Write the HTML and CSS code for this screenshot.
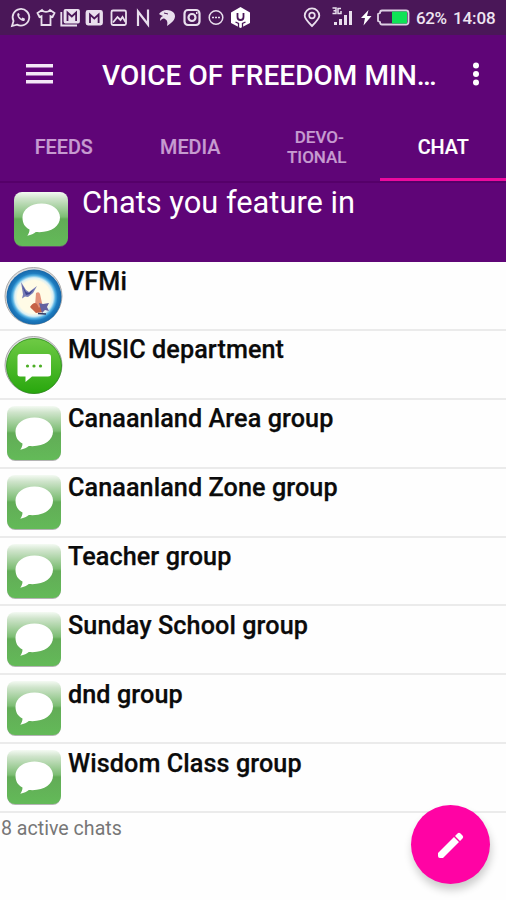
FILE: index.html
```html
<!DOCTYPE html>
<html lang="en">
<head>
<meta charset="utf-8">
<title>Chats</title>
<link rel="stylesheet" href="styles.css">
</head>
<body>
<svg class="defs" aria-hidden="true">
  <defs>
    <linearGradient id="gloss" x1="0" y1="0" x2="0" y2="1">
      <stop offset="0" stop-color="#f4faf3"/><stop offset=".12" stop-color="#cfe4cb"/><stop offset=".46" stop-color="#7dbd74"/><stop offset=".5" stop-color="#62ac57"/><stop offset="1" stop-color="#63ba58"/>
    </linearGradient>
    <linearGradient id="green" x1="0" y1="0" x2="0" y2="1">
      <stop offset="0" stop-color="#6fca45"/><stop offset="1" stop-color="#28a70d"/>
    </linearGradient>
    <radialGradient id="blue">
      <stop offset=".6" stop-color="#fffbe6"/><stop offset=".7" stop-color="#d8eff5"/><stop offset=".78" stop-color="#54b0e2"/><stop offset=".86" stop-color="#1c7cc0"/><stop offset="1" stop-color="#1767a8"/>
    </radialGradient>
    <symbol id="bubble" viewBox="0 0 56 58">
      <rect x="1.3" y="3" width="53.4" height="53" rx="8" fill="#777" opacity=".55"/>
      <rect x="1" y="1" width="54" height="54" rx="8" fill="url(#gloss)"/>
      <path d="M28.500 12.500C18 12.500 9.500 18.500 9.500 26.500c0 5.500 2 9.500 7 12 0 2.500-.8 4-2.200 6.200 4-.8 6.300-2 8.500-3.700 14.500 1.300 24.200-5.500 24.200-14.500 0-8-8-14-18.500-14z" fill="#fff"/>
    </symbol>
  </defs>
</svg>

<div class="status">
  <svg class="status-left" viewBox="0 0 250 35" fill="none" stroke="#e9dfed" stroke-width="1.800">
    <path d="M12 26l1.500-5a8.300 8.300 0 1 1 3.500 3.600z"/><path d="M17.500 13.500c-1.500 3 3.500 8.500 7 7.200l.5-2-2.500-1.200-1.200 1.200-2.500-2.700 1-1-1-2z" fill="#e9dfed" stroke="none"/>
    <path d="M42 10l-4.500 3 2 4 2-.8V25h9v-8.800l2 .8 2-4L50 10c-2 2.500-6 2.500-8 0z"/>
    <path d="M61.300 12v13.500H77"/><rect x="64.500" y="10" width="14.500" height="12.500" rx="1" fill="#e9dfed"/><path d="M67.500 21v-8.500l4.300 4 4.300-4V21" stroke="#4a1758" stroke-width="1.800"/>
    <rect x="86.500" y="11" width="15.500" height="13.500" rx="1.500" fill="#e9dfed"/><path d="M90 23v-8.500l4.300 4 4.300-4V23" stroke="#4a1758" stroke-width="1.800"/>
    <rect x="111.500" y="10.500" width="14.500" height="14.500" rx="1.500"/><path d="M113 22.500l4.500-5.500 3 3 2-3 3 5"/>
    <path d="M138 26V11.500L148 24.500V9.500" stroke-width="2.200"/>
    <path d="M159 14c4-6 12-4.500 15-1 3 5-1 9-7 13 1-4 0-6-2-7-2-1-3 0-5 2 0-3 1-4 3-5-2-1-3-1-4-2z" fill="#e9dfed" stroke="none"/><path d="M164 13l4 1" stroke="#4a1758" stroke-width="1"/>
    <rect x="184.500" y="10" width="15" height="15" rx="3.500" stroke-width="2.200"/><circle cx="192" cy="17.500" r="3.500" stroke-width="2.200"/><path d="M196 13h1.500"/>
    <circle cx="216" cy="17.500" r="6.800" stroke-width="1.500"/><path d="M212 17.500h8" stroke-dasharray="2 1" stroke-width="1.500"/>
    <path d="M240.500 7l9.500 5.500v10.500l-9.500 5-9.500-5v-10.500z" fill="#fff" stroke="none"/><path d="M237.500 13v4q0 3 3 3t3-3v-4" stroke="#4a1758" stroke-width="1.800"/><path d="M235.500 22l3 1.500v4M245.500 22l-3 1.500v4" stroke="#4a1758" stroke-width="1.300"/>
  </svg>
  <svg class="status-right" viewBox="0 0 112 35">
    <path d="M12 26c-5-5-7.300-7.500-7.300-10.300a7.300 7.300 0 0 1 14.600 0C19.300 18.500 17 21 12 26z" fill="none" stroke="#e9dfed" stroke-width="1.800"/><circle cx="12" cy="15.500" r="2.800" fill="none" stroke="#e9dfed" stroke-width="1.700"/>
    <path d="M32.500 8h3.500v5.500h-3.500m1-2.700h2m5.500-2.300h-3v5h3v-2.500" fill="none" stroke="#e9dfed" stroke-width="1.500"/>
    <path d="M34 22h3v3h-3zm5-3h3v6h-3zm5-4h3v10h-3zm5-4h3v14h-3z" fill="#e9dfed"/>
    <path d="M68.500 10L61 18h4l-1.500 7.500L71.500 16h-4.500z" fill="#fff"/>
    <path d="M82 10.500h24q2.500 0 2.500 2.500v9q0 2.500-2.500 2.500H82q-2 0-2-2.500l-2-1v-7l2-1q0-2.500 2-2.500z" fill="none" stroke="#ded0e4" stroke-width="1.800"/><path d="M92 11.500h15v12H92z" fill="#0ee356"/>
  </svg>
  <span class="battery">62%</span><span class="clock">14:08</span>
</div>

<header class="bar">
  <svg class="menu" viewBox="0 0 28 20" fill="#f3e8f7"><path d="M0 0h27v3.500H0zm0 8h27v3.500H0zm0 8h27v3.500H0z"/></svg>
  <h1><span>VOICE OF FREEDOM MIN…</span></h1>
  <svg class="more" viewBox="0 0 8 24" fill="#fff"><circle cx="4" cy="3.500" r="3"/><circle cx="4" cy="12" r="3"/><circle cx="4" cy="20.500" r="3"/></svg>
</header>

<nav class="tabs">
  <div class="tab">FEEDS</div>
  <div class="tab">MEDIA</div>
  <div class="tab small"><span><span class="line">DEVO-</span><br>TIONAL</span></div>
  <div class="tab active">CHAT</div>
</nav>

<section class="intro">
  <svg class="icon"><use href="#bubble"/></svg>
  <h2>Chats you feature in</h2>
</section>

<ul class="list">
  <li>
    <svg class="round" viewBox="0 0 60 64"><circle cx="29.500" cy="31" r="28.500" fill="#ddd" stroke="#aaa" stroke-width="1"/><circle cx="30" cy="32" r="27.500" fill="url(#blue)"/>
      <path d="M17 17l5 8 3 2 8-6-4 7-5 4-3-.5-3 2 1-4z" fill="#777cb5"/><path d="M18 20l4 7 3 1 5-4-4 5-4 1z" fill="#3e448f"/>
      <path d="M32 28q3-2 4 1l2 9 1 9-6-1-6-3 4-2z" fill="#e3927a"/><path d="M26 42q4-6 7-3l2 4 3-4 1 8-7 1z" fill="#c56245"/><path d="M35 38l4 1 6-1-2 4 2 4-4-1-3 3z" fill="#6563a0"/><path d="M34 48.500l8 .5" stroke="#333a64" stroke-width="1.500"/>
    </svg>
    <span class="name">VFMi</span></li>
  <li>
    <svg class="round" viewBox="0 0 60 64"><circle cx="29.500" cy="31" r="28.500" fill="#ddd" stroke="#aaa" stroke-width="1"/><circle cx="30" cy="32" r="27.500" fill="url(#green)" stroke="#258d13" stroke-width=".8"/>
      <path d="M16 20h28q3 0 3 3v17q0 2.500-3 2.500H28L21.500 48v-5.500H16q-2.500 0-2.500-2.500V23q0-3 2.500-3z" fill="#fff"/><g fill="#4cae25"><circle cx="23.500" cy="32" r="1.600"/><circle cx="30" cy="32" r="1.600"/><circle cx="36.500" cy="32" r="1.600"/></g>
    </svg>
    <span class="name">MUSIC department</span></li>
  <li><svg class="icon"><use href="#bubble"/></svg><span class="name">Canaanland Area group</span></li>
  <li><svg class="icon"><use href="#bubble"/></svg><span class="name">Canaanland Zone group</span></li>
  <li><svg class="icon"><use href="#bubble"/></svg><span class="name">Teacher group</span></li>
  <li><svg class="icon"><use href="#bubble"/></svg><span class="name">Sunday School group</span></li>
  <li><svg class="icon"><use href="#bubble"/></svg><span class="name">dnd group</span></li>
  <li><svg class="icon"><use href="#bubble"/></svg><span class="name">Wisdom Class group</span></li>
</ul>
<p class="count">8 active chats</p>

<button class="fab" aria-label="New chat">
  <svg viewBox="0 0 28 28" fill="#fff"><path d="M1 22L17 6l5 5L6 27H3q-2 0-2-2zM18 5l2.500-2.500q1.500-1.500 3 0l2 2q1.500 1.500 0 3L23 10z"/></svg>
</button>
</body>
</html>
```
FILE: styles.css
```css
* { box-sizing: border-box; margin: 0; padding: 0; }
body {
  width: 506px;
  height: 900px;
  overflow: hidden;
  background: #fefefe;
  font-family: Roboto, "Liberation Sans", sans-serif;
  color: #0b0b0b;
}
svg { display: block; flex: none; }
.defs { position: absolute; width: 0; height: 0; }

.status {
  display: flex;
  height: 35px;
  background: #4a1758;
  color: #eee5f1;
  font-size: 17px;
  line-height: 36px;
  font-weight: 500;
}
.status-left { width: 250px; height: 35px; }
.status-right { width: 112px; height: 35px; margin-left: 50px; }
.battery { margin-left: 4px; width: 37px; letter-spacing: -.4px; }
.clock { letter-spacing: -.1px; }

.bar {
  display: flex;
  align-items: center;
  height: 78px;
  padding: 0 26px;
  background: #5f0577;
  color: #fff;
}
.menu { width: 28px; height: 20px; }
.bar h1 {
  flex: 1;
  margin-left: 48px;
  padding-top: 2px;
  font-size: 28px;
  font-weight: 500;
  letter-spacing: .05px;
  white-space: nowrap;
}
.more { width: 8px; height: 24px; }

.tabs {
  display: grid;
  grid-template-columns: repeat(4, 1fr);
  height: 68px;
  background: #5f0577;
}
.tab {
  display: flex;
  align-items: center;
  justify-content: center;
  border-bottom: 3px solid transparent;
  padding: 4px 0 0 1px;
  text-align: center;
  font-size: 19.800px;
  font-weight: 500;
  color: #c69bd0;
  -webkit-text-stroke: .2px;
}
.tab.small { font-size: 17px; line-height: 19.500px; }
.tab .line { margin-left: 5px; }
.tab.active { color: #fff; border-color: #ec0a9e; }

.intro {
  display: flex;
  height: 81px;
  padding: 10px 0 0 13px;
  background: #5f0577;
  border-top: 2px solid #550069;
  color: #fff;
}
.intro .icon { margin: -2px 0 0; }
.intro h2 {
  margin: -9px 0 0 13px;
  font-size: 30.800px;
  font-weight: 400;
  line-height: 38px;
}
.icon { width: 56px; height: 58px; }
.round { width: 60px; height: 64px; }

.list { list-style: none; }
.list li {
  display: flex;
  height: 68.900px;
  padding: 5px 0 0 6px;
  border-bottom: 2px solid #ebebeb;
}
.list .round { margin: -2px -2px 0 -2px; }
.name {
  margin: -.500px 0 0 6px;
  font-size: 25.200px;
  font-weight: 500;
  line-height: 30px;
  letter-spacing: .08px;
  -webkit-text-stroke: .25px;
}
.count {
  padding-left: 1px;
  font-size: 19.600px;
  line-height: 31px;
  color: #777;
}
.fab {
  position: absolute;
  left: 411px;
  top: 805px;
  width: 79px;
  height: 79px;
  display: grid;
  place-items: center;
  border: 0;
  border-radius: 50%;
  background: #ff03a4;
  box-shadow: 1px 6px 9px rgba(0, 0, 0, .2);
}
.fab svg { width: 28px; height: 28px; }
```
